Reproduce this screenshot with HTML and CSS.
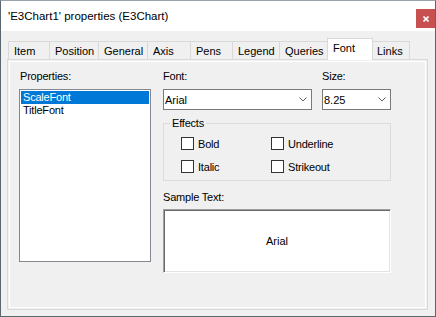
FILE: index.html
```html
<!DOCTYPE html>
<html lang="en">
<head>
    <meta charset="UTF-8">
    <title>'E3Chart1' properties (E3Chart)</title>
    <link rel="stylesheet" href="styles.css">
</head>
<body>
    <div class="window">
        <div class="titlebar">
            <span class="title">'E3Chart1' properties (E3Chart)</span>
            <button class="close" type="button">
                <svg width="6" height="6" viewBox="0 0 6 6"><path d="M0.5 0.5 L5.5 5.5 M5.5 0.5 L0.5 5.5" stroke="#fff" stroke-width="1.6" fill="none"/></svg>
            </button>
        </div>
        <div class="client">
            <div class="tabs">
                <div class="tab tab-item">Item</div>
                <div class="tab tab-position">Position</div>
                <div class="tab tab-general">General</div>
                <div class="tab tab-axis">Axis</div>
                <div class="tab tab-pens">Pens</div>
                <div class="tab tab-legend">Legend</div>
                <div class="tab tab-queries">Queries</div>
                <div class="tab tab-font active">Font</div>
                <div class="tab tab-links">Links</div>
            </div>
            <div class="panel">
                <div class="page">
                    <div class="col-left">
                        <div class="label">Properties:</div>
                        <ul class="listbox">
                            <li class="selected">ScaleFont</li>
                            <li>TitleFont</li>
                        </ul>
                    </div>
                    <div class="col-right">
                        <div class="fields">
                            <div class="field field-font">
                                <div class="label">Font:</div>
                                <div class="combo">
                                    <span>Arial</span>
                                    <svg width="8" height="5" viewBox="0 0 8 5"><path d="M0.5 0.5 L4 4 L7.5 0.5" stroke="#606060" fill="none"/></svg>
                                </div>
                            </div>
                            <div class="field field-size">
                                <div class="label">Size:</div>
                                <div class="combo">
                                    <span>8.25</span>
                                    <svg width="8" height="5" viewBox="0 0 8 5"><path d="M0.5 0.5 L4 4 L7.5 0.5" stroke="#606060" fill="none"/></svg>
                                </div>
                            </div>
                        </div>
                        <fieldset class="effects">
                            <legend>Effects</legend>
                            <div class="checks">
                                <label class="check"><span class="box"></span>Bold</label>
                                <label class="check"><span class="box"></span>Underline</label>
                                <label class="check"><span class="box"></span>Italic</label>
                                <label class="check"><span class="box"></span>Strikeout</label>
                            </div>
                        </fieldset>
                        <div class="label label-sample">Sample Text:</div>
                        <div class="sample">Arial</div>
                    </div>
                </div>
            </div>
        </div>
    </div>
</body>
</html>
```

FILE: styles.css
```css
body {
    margin: 0;
    font-family: 'Liberation Sans', Arial, sans-serif;
    color: #000;
}

.window {
    width: 436px;
    height: 317px;
    box-sizing: border-box;
    border: 1px solid #5b6770;
    border-top-color: #9aa3aa;
    background: #f0f0f0;
    display: flex;
    flex-direction: column;
}

.titlebar {
    height: 30px;
    background: #ffffff;
    display: flex;
    align-items: flex-start;
    justify-content: space-between;
}

.title {
    font-size: 11.5px;
    line-height: 16px;
    margin: 7px 0 0 7px;
}

.close {
    width: 19px;
    height: 19px;
    margin-top: 8px;
    padding: 0;
    border: none;
    background: #c75050;
    display: flex;
    align-items: center;
    justify-content: center;
}

.client {
    flex: 1;
    padding: 7px 7px 6px 6px;
    display: flex;
    flex-direction: column;
}

.tabs {
    display: flex;
    align-items: flex-end;
    height: 21px;
    padding-left: 1px;
    position: relative;
    z-index: 1;
}

.tab {
    height: 18px;
    box-sizing: border-box;
    border: 1px solid #d9d9d9;
    border-bottom: none;
    background: #f0f0f0;
    font-size: 11px;
    padding-left: 5px;
    display: flex;
    align-items: center;
    margin-left: -1px;
}

.tab:first-child {
    margin-left: 0;
}

.tab.active {
    height: 22px;
    margin-bottom: -1px;
    padding-bottom: 4px;
    background: #ffffff;
    position: relative;
    z-index: 2;
}

.tab-item { width: 42px; }
.tab-position { width: 50px; }
.tab-general { width: 50px; }
.tab-axis { width: 44px; }
.tab-pens { width: 43px; }
.tab-legend { width: 48px; }
.tab-queries { width: 49px; }
.tab-font { width: 46px; }
.tab-links { width: 38px; padding-left: 4px; }

.panel {
    flex: 1;
    border: 1px solid #d9d9d9;
    padding: 1px;
    display: flex;
}

.page {
    flex: 1;
    border: 1px solid #ffffff;
    display: flex;
    gap: 12px;
    padding: 8px 0 0 9px;
}

.label {
    font-size: 11px;
    letter-spacing: -0.2px;
    line-height: 13px;
    height: 13px;
    margin-bottom: 6px;
    padding-left: 1px;
}

.col-left {
    width: 132px;
}

.listbox {
    height: 173px;
    box-sizing: border-box;
    margin: 0;
    padding: 1px;
    list-style: none;
    border: 1px solid #828790;
    background: #ffffff;
}

.listbox li {
    height: 13px;
    line-height: 13px;
    font-size: 11px;
    letter-spacing: -0.2px;
    padding-left: 2px;
}

.listbox li.selected {
    background: #0078d7;
    color: #ffffff;
}

.col-right {
    width: 228px;
    display: flex;
    flex-direction: column;
}

.fields {
    display: flex;
    gap: 10px;
}

.field-font { width: 149px; }
.field-size { width: 69px; }

.field .label {
    padding-left: 0;
}

.combo {
    height: 21px;
    box-sizing: border-box;
    border: 1px solid #7a7a7a;
    background: #ffffff;
    display: flex;
    align-items: center;
    justify-content: space-between;
    padding: 0 4px 0 1px;
    font-size: 11px;
}

.effects {
    margin: 7px 0 0;
    padding: 0;
    min-width: 0;
    border: 1px solid #dcdcdc;
}

.effects legend {
    font-size: 11px;
    letter-spacing: -0.2px;
    line-height: 13px;
    margin-left: 6px;
    padding: 0 2px;
}

.checks {
    display: grid;
    grid-template-columns: 90px auto;
    row-gap: 10px;
    padding: 7px 0 7px 17px;
}

.check {
    display: flex;
    align-items: center;
    height: 13px;
    font-size: 11px;
    letter-spacing: -0.2px;
}

.box {
    width: 13px;
    height: 13px;
    box-sizing: border-box;
    border: 1px solid #333333;
    background: #ffffff;
    margin-right: 4px;
}

.label-sample {
    margin-top: 10px;
    margin-bottom: 5px;
    padding-left: 0;
}

.sample {
    height: 64px;
    box-sizing: border-box;
    border: 1px solid;
    border-color: #a0a0a0 #ffffff #ffffff #a0a0a0;
    box-shadow: inset 1px 1px 0 #696969, inset -1px -1px 0 #e3e3e3;
    background: #ffffff;
    display: flex;
    align-items: center;
    justify-content: center;
    font-size: 11px;
}
```
